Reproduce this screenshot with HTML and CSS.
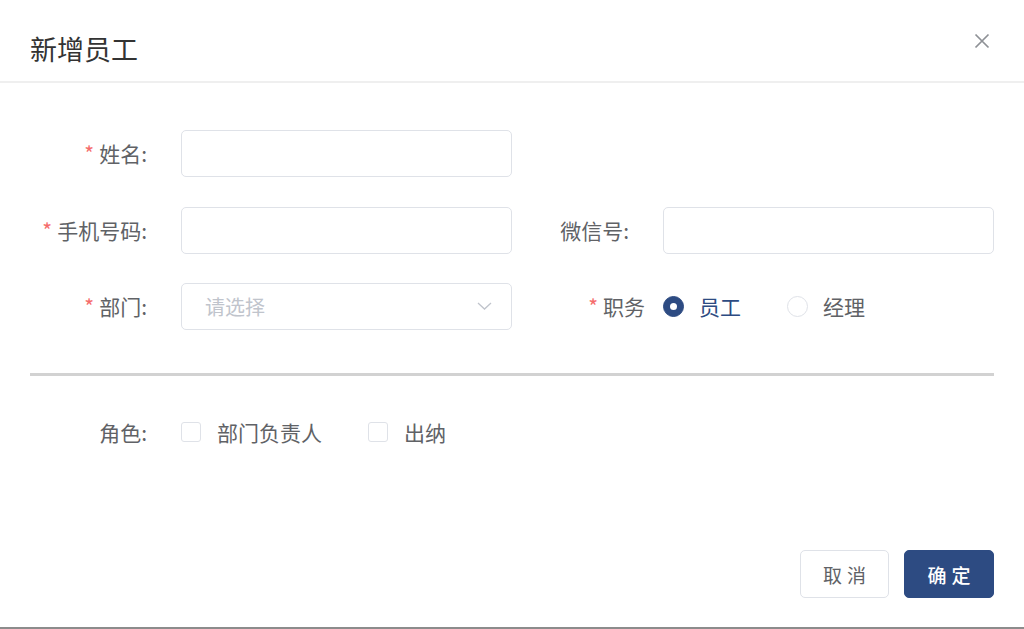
FILE: index.html
```html
<!DOCTYPE html>
<html lang="zh-CN">
<head>
<meta charset="utf-8">
<title>新增员工</title>
<link rel="stylesheet" href="styles.css">
</head>
<body>
<div class="dialog">
  <header class="dlg-header">
    <h2 class="dlg-title">新增员工</h2>
    <button class="dlg-close" type="button" aria-label="关闭">
      <svg width="16" height="16" viewBox="0 0 16 16"><path d="M1.5 1.5L14.5 14.5M14.5 1.5L1.5 14.5" stroke="#8e9196" stroke-width="1.7" fill="none"/></svg>
    </button>
  </header>
  <div class="dlg-body">
    <div class="form-grid">
      <div class="field">
        <label class="label required">姓名:</label>
        <div class="input"></div>
      </div>
      <div class="field"></div>
      <div class="field">
        <label class="label required">手机号码:</label>
        <div class="input"></div>
      </div>
      <div class="field">
        <label class="label">微信号:</label>
        <div class="input"></div>
      </div>
      <div class="field">
        <label class="label required">部门:</label>
        <div class="input select">
          <span class="placeholder">请选择</span>
          <svg class="chevron" width="15" height="8" viewBox="0 0 15 8"><path d="M1 1L7.5 7L14 1" stroke="#c0c4cc" stroke-width="1.3" fill="none"/></svg>
        </div>
      </div>
      <div class="field">
        <label class="label required label-tight">职务</label>
        <div class="radio-group">
          <span class="radio checked"><span class="radio-dot"></span><span class="radio-text">员工</span></span>
          <span class="radio"><span class="radio-dot"></span><span class="radio-text">经理</span></span>
        </div>
      </div>
    </div>
    <div class="divider"></div>
    <div class="field role-row">
      <label class="label">角色:</label>
      <div class="check-group">
        <span class="check"><span class="check-box"></span><span class="check-text">部门负责人</span></span>
        <span class="check"><span class="check-box"></span><span class="check-text">出纳</span></span>
      </div>
    </div>
  </div>
  <footer class="dlg-footer">
    <button class="btn" type="button">取消</button>
    <button class="btn btn-primary" type="button">确定</button>
  </footer>
</div>
</body>
</html>
```
FILE: styles.css
```css
* { box-sizing: border-box; }
html, body { margin: 0; padding: 0; background: #fff; }
body {
  font-family: "Noto Sans CJK SC", "Noto Sans", sans-serif;
  color: #606266;
}
.dialog {
  width: 1024px;
  height: 629px;
  border-bottom: 2px solid #8c8c8c;
  display: flex;
  flex-direction: column;
}
.dlg-header {
  height: 83px;
  padding: 30px 34px 0 30px;
  border-bottom: 2px solid #efefef;
  display: flex;
  justify-content: space-between;
  align-items: flex-start;
}
.dlg-title {
  margin: 0;
  font-size: 27px;
  font-weight: 400;
  line-height: 38px;
  color: #333;
}
.dlg-close {
  margin-top: 3px;
  padding: 0;
  border: 0;
  background: transparent;
  width: 16px;
  height: 16px;
  display: block;
}
.dlg-close svg { display: block; }
.dlg-body {
  padding: 47px 30px 0 30px;
}
.form-grid {
  display: grid;
  grid-template-columns: 482px 482px;
  row-gap: 29.5px;
}
.field {
  display: flex;
  align-items: center;
  height: 47px;
}
.label {
  width: 151px;
  flex: none;
  text-align: right;
  padding-right: 34px;
  font-size: 21px;
  color: #606266;
  line-height: 45px;
}
.label.required::before {
  content: "*";
  color: #f56c6c;
  margin-right: 5px;
}
.label-tight { padding-right: 18px; }
.input {
  width: 331px;
  height: 47px;
  border: 1.5px solid #dfe2e8;
  border-radius: 5px;
  background: #fff;
}
.select {
  display: flex;
  align-items: center;
  justify-content: space-between;
  padding: 0 19px 0 23px;
}
.placeholder {
  font-size: 20px;
  color: #c0c4cc;
  line-height: 45px;
}
.chevron { display: block; margin-top: -1px; }
.radio-group, .check-group {
  display: flex;
  align-items: center;
  gap: 46px;
}
.radio, .check {
  display: flex;
  align-items: center;
  gap: 15px;
  font-size: 21px;
  line-height: 45px;
}
.radio-dot {
  width: 21px;
  height: 21px;
  border-radius: 50%;
  border: 1.5px solid #dfe2e8;
  background: #fff;
  position: relative;
}
.radio.checked .radio-dot {
  background: #2d4b82;
  border-color: #2d4b82;
}
.radio.checked .radio-dot::after {
  content: "";
  position: absolute;
  left: 50%;
  top: 50%;
  width: 7px;
  height: 7px;
  margin: -3.5px 0 0 -3.5px;
  border-radius: 50%;
  background: #fff;
}
.radio.checked .radio-text { color: #2d4b82; }
.divider {
  margin-top: 43px;
  height: 3px;
  background: #d2d2d2;
}
.role-row { margin-top: 32.5px; }
.check { gap: 16px; }
.check-box {
  width: 20px;
  height: 20px;
  border: 1.5px solid #dfe2e8;
  border-radius: 3px;
  background: #fff;
}
.dlg-footer {
  margin-top: auto;
  padding: 0 30px 29px 0;
  display: flex;
  justify-content: flex-end;
  gap: 15px;
}
.btn {
  width: 89px;
  height: 48px;
  border: 1.5px solid #dfe2e8;
  border-radius: 5px;
  background: #fff;
  color: #606266;
  font-family: "Noto Sans CJK SC", "Noto Sans", sans-serif;
  font-size: 19px;
  letter-spacing: 5px;
  padding: 0 0 0 5px;
}
.btn-primary {
  width: 90px;
  background: #2d4b82;
  border-color: #2d4b82;
  color: #fff;
  font-weight: 500;
}
```
